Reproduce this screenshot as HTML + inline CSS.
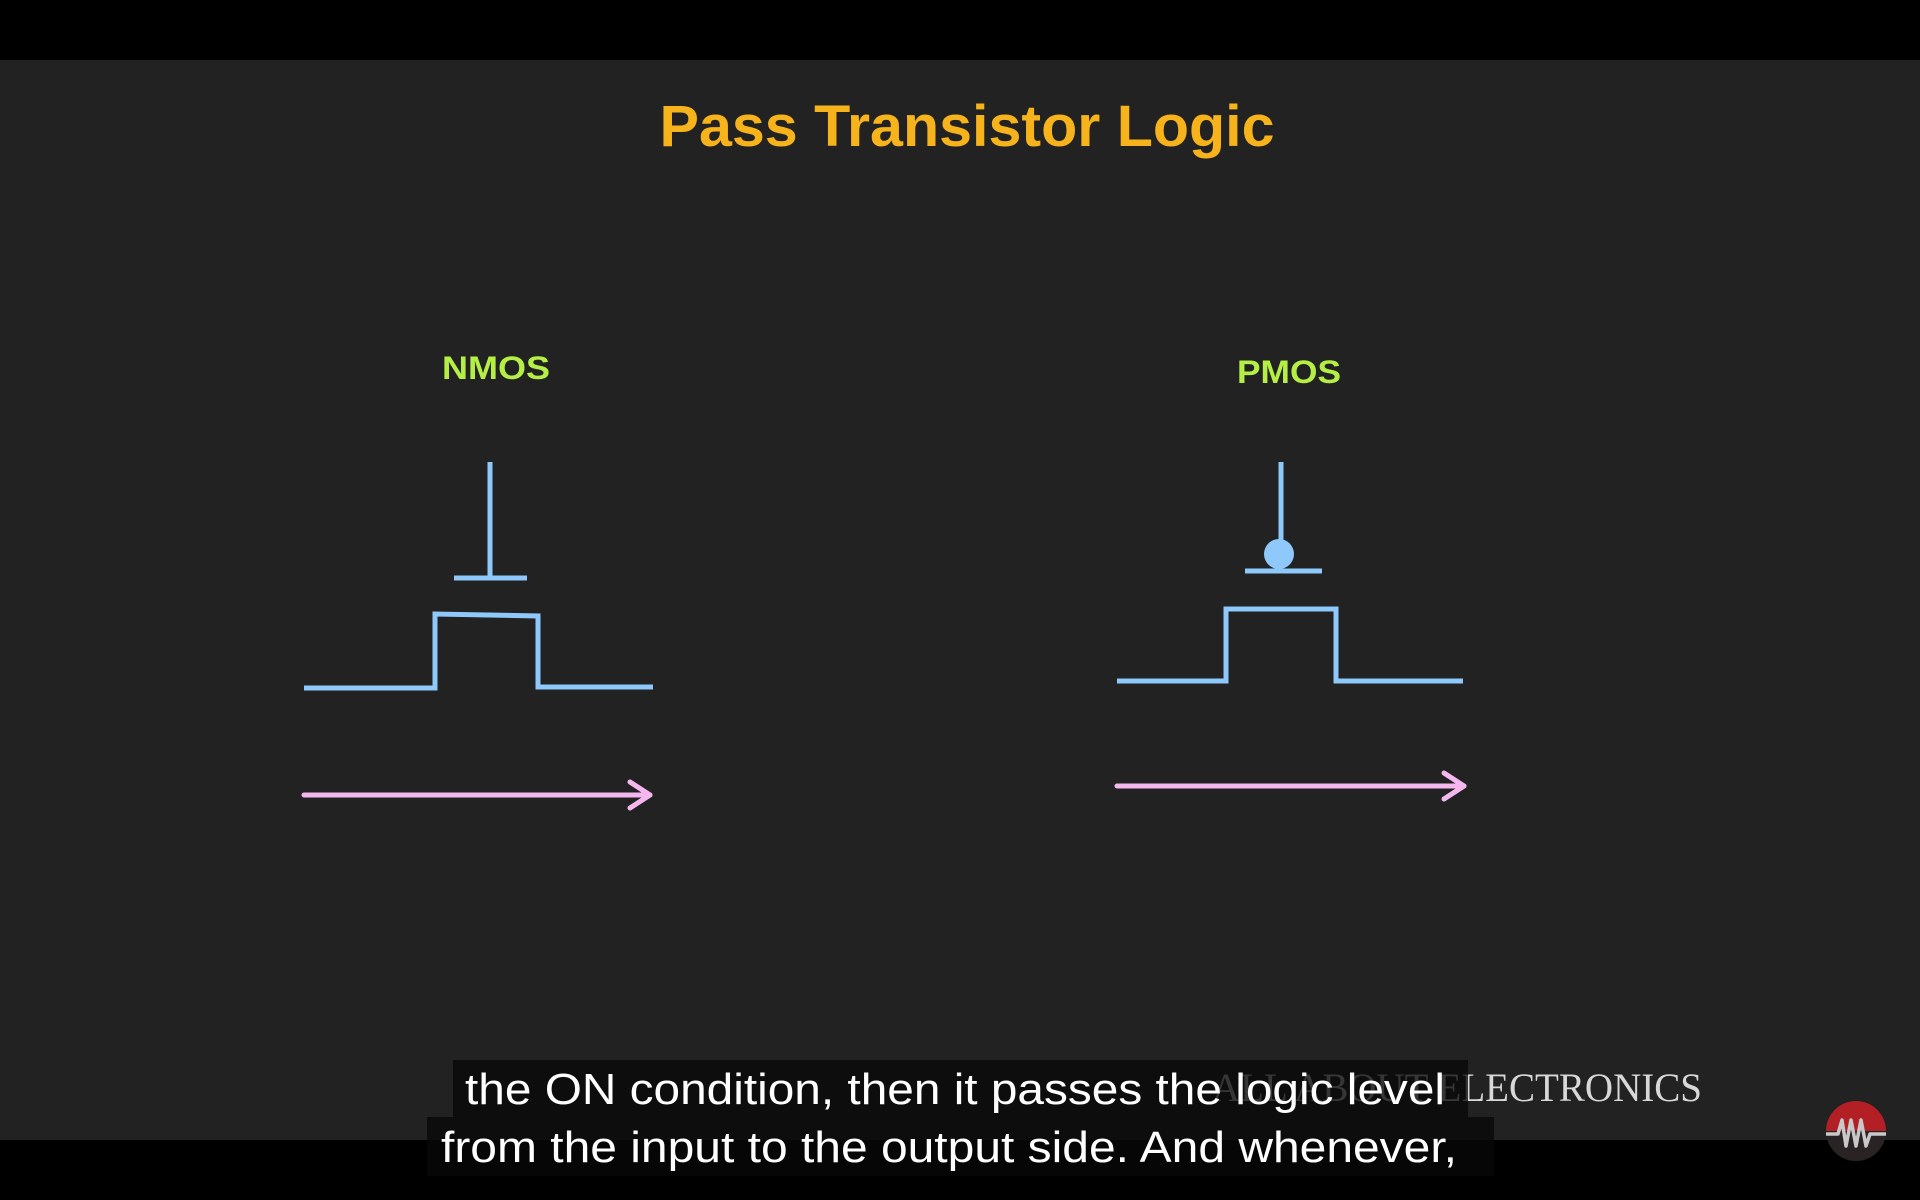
<!DOCTYPE html>
<html><head><meta charset="utf-8"><style>
html,body{margin:0;padding:0;background:#000;}
svg{display:block}
</style></head><body>
<svg width="1920" height="1200" viewBox="0 0 1920 1200" xmlns="http://www.w3.org/2000/svg">
<rect x="0" y="0" width="1920" height="1200" fill="#000"/>
<rect x="0" y="60" width="1920" height="1080" fill="#222222"/>
<text x="967" y="146" text-anchor="middle" font-family="Liberation Sans, sans-serif" font-weight="bold" font-size="58" fill="#f7b31c" textLength="615" lengthAdjust="spacingAndGlyphs">Pass Transistor Logic</text>
<text x="496" y="379" text-anchor="middle" font-family="Liberation Sans, sans-serif" font-weight="bold" font-size="32" fill="#b5ef45" textLength="108" lengthAdjust="spacingAndGlyphs">NMOS</text>
<text x="1289" y="383" text-anchor="middle" font-family="Liberation Sans, sans-serif" font-weight="bold" font-size="32" fill="#b5ef45" textLength="104" lengthAdjust="spacingAndGlyphs">PMOS</text>
<g stroke="#8fc8fb" stroke-width="5" fill="none" stroke-linecap="butt">
<line x1="490" y1="462" x2="490" y2="578"/>
<line x1="454" y1="578" x2="527" y2="578"/>
<polyline points="304,688 435,688 435,614 538,616 538,687 653,687"/>
<line x1="1281" y1="462" x2="1281" y2="555"/>
<line x1="1245" y1="571" x2="1322" y2="571"/>
<polyline points="1117,681 1226,681 1226,609 1336,609 1336,681 1463,681"/>
</g>
<circle cx="1279" cy="554" r="15" fill="#8fc8fb"/>
<g stroke="#f4b8ee" stroke-width="5" fill="none" stroke-linecap="round" stroke-linejoin="round">
<line x1="304" y1="795" x2="650" y2="795"/>
<polyline points="630,782 650,795 630,808"/>
<line x1="1117" y1="786" x2="1464" y2="786"/>
<polyline points="1444,773 1464,786 1444,799"/>
</g>
<text x="1212" y="1101" font-family="Liberation Serif, serif" font-size="40" fill="#d8d8d8" textLength="490" lengthAdjust="spacingAndGlyphs">ALL ABOUT ELECTRONICS</text>
<rect x="453" y="1060" width="1015" height="57" fill="rgba(8,8,8,0.78)"/>
<rect x="427" y="1117" width="1067" height="59" fill="rgba(8,8,8,0.78)"/>
<text x="465" y="1104" font-family="Liberation Sans, sans-serif" font-size="44" fill="#fff" textLength="980" lengthAdjust="spacingAndGlyphs">the ON condition, then it passes the logic level</text>
<text x="441" y="1162" font-family="Liberation Sans, sans-serif" font-size="44" fill="#fff" textLength="1016" lengthAdjust="spacingAndGlyphs">from the input to the output side. And whenever,</text>
<clipPath id="c"><circle cx="1856" cy="1131" r="30"/></clipPath>
<g clip-path="url(#c)">
<rect x="1820" y="1090" width="80" height="80" fill="#2a2323"/>
<rect x="1820" y="1090" width="80" height="41" fill="#b21f25"/>
</g>
<polyline points="1826,1134 1838,1134 1842,1120 1846,1146 1851,1120 1856,1146 1861,1120 1866,1146 1870,1134 1886,1134" fill="none" stroke="#c8c8c8" stroke-width="3.5" stroke-linejoin="round"/>
</svg>
</body></html>
